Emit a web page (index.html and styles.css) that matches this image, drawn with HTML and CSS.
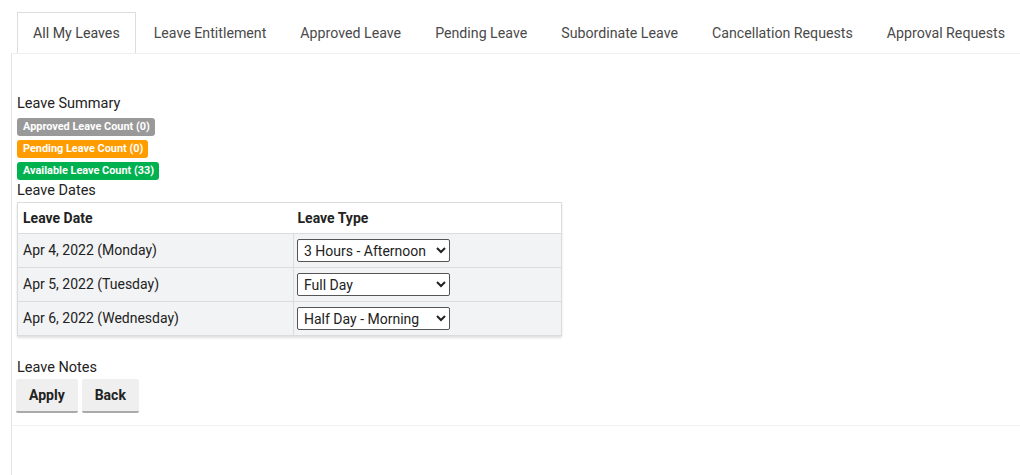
FILE: index.html
```html
<!DOCTYPE html>
<html>
<head>
<meta charset="utf-8">
<link rel="stylesheet" href="styles.css">
</head>
<body>
<ul class="tabs">
  <li class="tab active">All My Leaves</li>
  <li class="tab">Leave Entitlement</li>
  <li class="tab">Approved Leave</li>
  <li class="tab">Pending Leave</li>
  <li class="tab">Subordinate Leave</li>
  <li class="tab">Cancellation Requests</li>
  <li class="tab">Approval Requests</li>
</ul>
<div class="panel">
  <div class="content">
    <div class="label">Leave Summary</div>
    <div class="badges">
      <span class="badge gray">Approved Leave Count (0)</span>
      <span class="badge orange">Pending Leave Count (0)</span>
      <span class="badge green">Available Leave Count (33)</span>
    </div>
    <div class="label">Leave Dates</div>
    <table class="dates">
      <thead>
        <tr><th class="c1">Leave Date</th><th class="c2">Leave Type</th></tr>
      </thead>
      <tbody>
        <tr><td class="c1">Apr 4, 2022 (Monday)</td><td class="c2"><select class="sel"><option>3 Hours - Afternoon</option></select></td></tr>
        <tr><td class="c1">Apr 5, 2022 (Tuesday)</td><td class="c2"><select class="sel"><option>Full Day</option></select></td></tr>
        <tr><td class="c1">Apr 6, 2022 (Wednesday)</td><td class="c2"><select class="sel"><option>Half Day - Morning</option></select></td></tr>
      </tbody>
    </table>
    <div class="label notes">Leave Notes</div>
    <div class="buttons">
      <button class="btn">Apply</button>
      <button class="btn">Back</button>
    </div>
  </div>
  <div class="footer"></div>
</div>
</body>
</html>
```
FILE: styles.css
```css
html, body {
  margin: 0;
  padding: 0;
  background: #fff;
  font-family: Roboto, "Liberation Sans", sans-serif;
  color: #222;
  height: 100%;
}
.tabs {
  list-style: none;
  margin: 0;
  padding: 12px 0 0 17px;
  display: flex;
  white-space: nowrap;
  position: relative;
  z-index: 1;
}
.tab {
  height: 40px;
  line-height: 40px;
  padding: 0 15px 0 15px;
  border: 1px solid transparent;
  border-bottom: none;
  font-size: 14.2px;
  color: #4a4a4a;
  margin-right: 2px;
}
.tab.active {
  border-color: #dddddd;
  background: #fff;
  color: #444;
}
.panel {
  margin-left: 11px;
  border-left: 1px solid #e4e4e4;
  border-top: 1px solid #f0f0f0;
  min-height: 422px;
}
.content {
  padding: 40px 0 0 5px;
}
.label {
  font-size: 14.5px;
  line-height: 20px;
  color: #222;
}
.badges {
  display: flex;
  flex-direction: column;
  align-items: flex-start;
  gap: 4px;
  margin: 4px 0 1px;
}
.badge {
  display: inline-block;
  height: 18px;
  line-height: 18px;
  padding: 0 5px 0 6px;
  border-radius: 3px;
  font-size: 10.9px;
  font-weight: bold;
  color: #fff;
}
.gray { background: #999999; }
.orange { background: #ff9c00; }
.green { background: #00b24f; }
.dates {
  margin-top: 1px;
  border-collapse: collapse;
  width: 545px;
  border: 1px solid #dcdcdc;
  box-shadow: 0 2px 2px rgba(0,0,0,0.12);
  font-size: 14px;
}
.dates th {
  text-align: left;
  font-weight: bold;
  height: 30px;
  padding: 0 5px;
  background: #fff;
  color: #222;
  border-bottom: 1px solid #dcdcdc;
}
.dates td {
  height: 33px;
  padding: 0 5px;
  background: #f2f3f4;
  border-bottom: 1px solid #dcdcdc;
  vertical-align: middle;
}
.dates td.c1 {
  padding-bottom: 2px;
  height: 31px;
}
.dates .c1 {
  width: 265px;
  border-right: 1px solid #dcdcdc;
}
.dates th.c1 { border-right: none; }
.dates .c2 { padding-left: 3px; }
.dates th.c2 { padding-left: 4px; }
.sel {
  width: 153px;
  height: 23px;
  font-family: Roboto, "Liberation Sans", sans-serif;
  font-size: 14px;
  color: #222;
  background: #fff;
  border: 1px solid #555;
  border-radius: 2px;
  padding: 0 2px;
  display: block;
}
.notes {
  margin-top: 22px;
}
.buttons {
  display: flex;
  gap: 4px;
  margin-left: -1px;
  margin-top: 1px;
}
.btn {
  height: 34px;
  padding: 0 13px;
  border: none;
  border-bottom: 2px solid #aaaaaa;
  border-radius: 2px;
  background: #efefef;
  font-family: Roboto, "Liberation Sans", sans-serif;
  font-size: 14px;
  font-weight: bold;
  color: #222;
}
.footer {
  margin-top: 12px;
  border-top: 1px solid #f0f0f0;
}
```
